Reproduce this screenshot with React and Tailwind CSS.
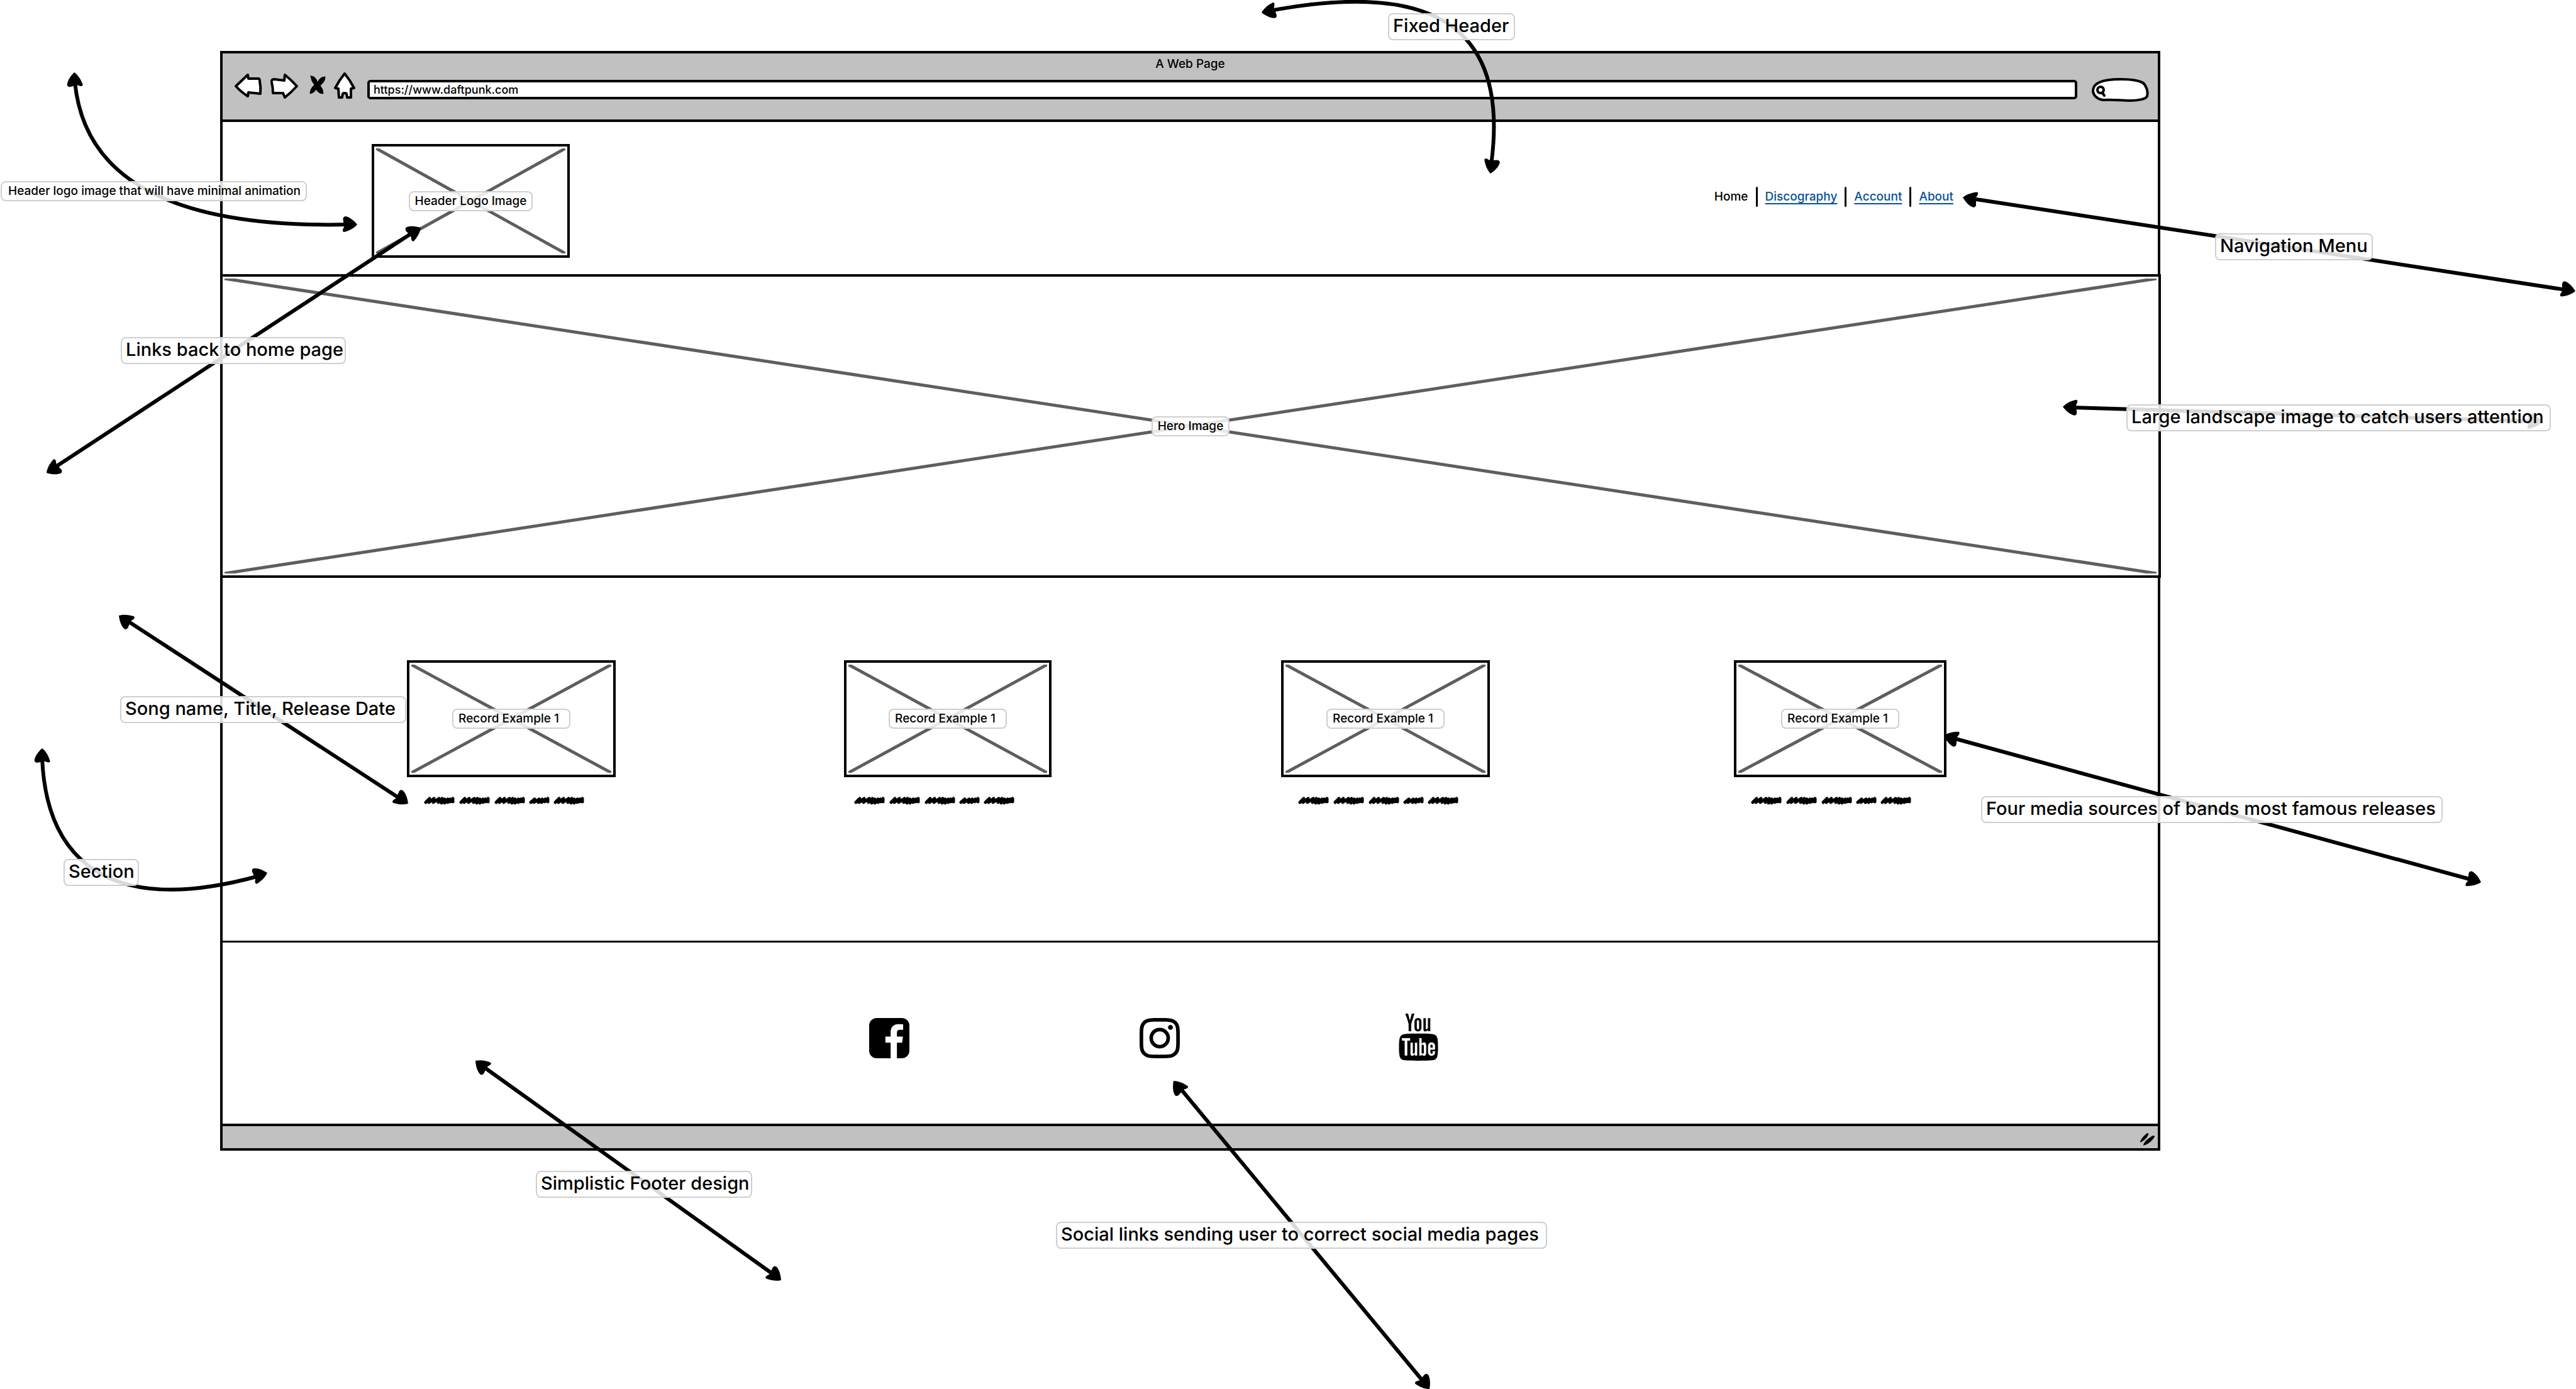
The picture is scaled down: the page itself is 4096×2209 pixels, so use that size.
import { FaInstagram } from "react-icons/fa";
import { TfiYoutube } from "react-icons/tfi";

const CANVAS_WIDTH = 4096;
const CANVAS_HEIGHT = 2209;

const HEAD =
  "M0 0 C-5 -6 -12 -12 -19 -13 Q-24 -12 -22 -5 L-21 4 Q-25 11 -21 12 C-13 10 -5 6 0 0 Z";

/* Each arrow runs between two tips; angles point outwards from the shaft. */
const ARROWS = [
  { d: "M2020 17 C2250 -26 2404 20 2371 262", a: [2006, 20, 168], b: [2370, 276, 96] },
  { d: "M119 130 C135 300 300 363 555 357", a: [118, 115, -95], b: [568, 357, 0] },
  { d: "M86 744 L656 370", a: [74, 752, 147], b: [669, 362, -33] },
  { d: "M202 987 L636 1270", a: [189, 979, 213], b: [649, 1278, 33] },
  { d: "M67 1205 C72 1335 140 1468 412 1393", a: [67, 1190, -92], b: [425, 1388, -17] },
  { d: "M3136 316 L4080 461", a: [3121, 314, 189], b: [4095, 463, 9] },
  { d: "M3296 648 L4027 670", a: [3280, 647, 182], b: [4042, 671, 2] },
  { d: "M3106 1174 L3930 1399", a: [3091, 1170, 195], b: [3945, 1403, 15] },
  { d: "M768 1696 L1230 2027", a: [756, 1687, 216], b: [1242, 2036, 36] },
  { d: "M1876 1730 L2263 2197", a: [1866, 1719, 230], b: [2273, 2209, 50] },
];

const NOTES = [
  { text: "Fixed Header", x: 2207, y: 21, w: 202 },
  { text: "Header logo image that will have minimal animation", x: 1, y: 288, w: 487, small: true },
  { text: "Links back to home page", x: 192, y: 536, w: 358 },
  { text: "Navigation Menu", x: 3522, y: 371, w: 251 },
  { text: "Large landscape image to catch users attention", x: 3381, y: 643, w: 675 },
  { text: "Song name, Title, Release Date", x: 191, y: 1107, w: 455 },
  { text: "Section", x: 101, y: 1366, w: 120 },
  { text: "Four media sources of bands most famous releases", x: 3150, y: 1266, w: 734 },
  { text: "Simplistic Footer design", x: 852, y: 1862, w: 344 },
  { text: "Social links sending user to correct social media pages", x: 1679, y: 1943, w: 781 },
];

const RECORDS = [
  { box: "w-[332px]", line: "ml-[27px]" },
  { box: "ml-[363px] w-[330px]", line: "ml-4" },
  { box: "ml-[365px] w-[332px]", line: "ml-[27px]" },
  { box: "ml-[388px] w-[338px]", line: "ml-[27px]" },
];

function Tag({ children, className = "px-2" }) {
  return (
    <span
      className={`relative rounded-lg border-2 border-[#cfcfcf] bg-white/85 text-[19px] leading-7 whitespace-nowrap ${className}`}
    >
      {children}
    </span>
  );
}

function Placeholder({ label, className, tagClassName }) {
  return (
    <div className={`relative flex items-center justify-center border-4 border-black bg-white ${className}`}>
      <svg className="absolute inset-[3px] h-[calc(100%-6px)] w-[calc(100%-6px)]" aria-hidden="true">
        <line x1="0" y1="0" x2="100%" y2="100%" stroke="#5e5e5e" strokeWidth="5" />
        <line x1="0" y1="100%" x2="100%" y2="0" stroke="#5e5e5e" strokeWidth="5" />
      </svg>
      <Tag className={tagClassName}>{label}</Tag>
    </div>
  );
}

const LONG_WORD =
  "M3 9 L9 3 L8 9 L16 3 L15 9 L24 3 L23 9 L29 3 L28 10 L33 4 L33 10 L38 4 L38 9 L42 4 L42 8 L46 3 L46 8";
const SHORT_WORD = "M3 9 L9 4 L8 9 L16 4 L15 9 L21 4 L20 9 L26 4 L25 8 L30 3 L30 8";

function Scribble({ className }) {
  return (
    <svg
      className={`mt-[31px] h-3 w-[257px] overflow-visible ${className}`}
      viewBox="0 0 257 12"
      fill="none"
      stroke="black"
      strokeWidth="5"
      strokeLinecap="round"
      strokeLinejoin="round"
      aria-hidden="true"
    >
      <path d={LONG_WORD} />
      <path d={LONG_WORD} transform="translate(56 0)" />
      <path d={LONG_WORD} transform="translate(112 0)" />
      <path d={SHORT_WORD} transform="translate(167 0)" />
      <path d={LONG_WORD} transform="translate(206 0)" />
    </svg>
  );
}

function ToolIcon({ label, className, box, children }) {
  return (
    <button type="button" aria-label={label} className={`block flex-none ${className}`}>
      <svg
        className="h-full w-full overflow-visible"
        viewBox={box}
        fill="white"
        stroke="black"
        strokeWidth="4"
        strokeLinejoin="round"
        strokeLinecap="round"
      >
        {children}
      </svg>
    </button>
  );
}

function Toolbar() {
  return (
    <div className="h-[109px] border-b-4 border-black bg-[#c1c1c1]">
      <h1 className="h-[30px] pt-[3px] text-center text-[19px] leading-7">A Web Page</h1>
      <div className="flex h-12 items-start pr-[14px] pl-[19px]">
        <ToolIcon label="Back" className="h-[42px] w-11" box="0 0 44 42">
          <path d="M2 22 L21 4 L22 10 L38 10 Q40 10 40 14 Q42 24 41 34 L22 32 L21 38 Q10 31 2 22 Z" />
        </ToolIcon>
        <ToolIcon label="Forward" className="ml-[13px] h-[42px] w-11" box="0 0 44 42">
          <path d="M2 16 Q1 11 6 11 L22 13 L23 4 Q33 12 42 22 Q33 32 23 40 L20 33 L4 33 Q4 24 2 16 Z" />
        </ToolIcon>
        <ToolIcon label="Stop" className="ml-[19px] h-[42px] w-6" box="0 0 24 42">
          <path
            d="M1 6 Q8 5 12 16 Q16 7 24 7 Q24 15 16 21 Q21 27 21 34 Q13 34 10 27 Q6 33 0 34 Q0 26 7 20 Q2 14 1 6 Z"
            fill="black"
            strokeWidth="1"
          />
        </ToolIcon>
        <ToolIcon label="Home" className="ml-[14px] h-[42px] w-[34px]" box="0 0 34 42">
          <path d="M17 2 Q26 13 32 25 L27 26 L27 40 L21 40 L20 34 Q17 32 14 34 L13 40 L8 40 L7 26 L2 25 Q8 13 17 2 Z" />
        </ToolIcon>
        <input
          type="text"
          aria-label="Address"
          defaultValue="https://www.daftpunk.com"
          className="mt-3 ml-[19px] h-[31px] min-w-0 flex-1 rounded-[5px] border-4 border-black bg-white pl-[6px] text-[18px] leading-6 outline-none"
        />
        <div className="relative mt-[9px] ml-[23px] h-[38px] w-[91px] flex-none">
          <svg
            className="absolute inset-0 h-full w-full"
            viewBox="0 0 91 38"
            fill="white"
            stroke="black"
            strokeWidth="4"
            strokeLinecap="round"
            strokeLinejoin="round"
            aria-hidden="true"
          >
            <path d="M19 35 C8 34 2 27 2 20 C2 6 22 2 46 2 C62 2 75 4 82 8 C87 13 90 22 88 29 C86 34 72 36 60 36 C46 36 34 34 19 35 Z" />
            <circle cx="14" cy="19" r="5" strokeWidth="4" />
            <path d="M17 24 L20 28" />
          </svg>
          <input
            type="search"
            aria-label="Search"
            className="relative h-full w-full bg-transparent pr-3 pl-7 text-[18px] outline-none"
          />
        </div>
      </div>
    </div>
  );
}

function NavLink({ href, children }) {
  return (
    <a href={href} className="text-[#06529a] underline decoration-2 underline-offset-4">
      {children}
    </a>
  );
}

function Divider() {
  return <span className="h-8 w-[3px] rounded-full bg-black" />;
}

function SiteHeader() {
  return (
    <header className="flex h-[242px] items-start justify-between pr-[325px] pl-[237px]">
      <Placeholder label="Header Logo Image" className="mt-[35px] h-[181px] w-[315px]" />
      <nav className="mt-[103px] flex h-8 items-center gap-3 text-[19px] leading-7">
        <span>Home</span>
        <Divider />
        <NavLink href="#discography">Discography</NavLink>
        <Divider />
        <NavLink href="#account">Account</NavLink>
        <Divider />
        <NavLink href="#about">About</NavLink>
      </nav>
    </header>
  );
}

function FacebookIcon() {
  return (
    <svg className="size-16" viewBox="0 128 1536 1536" aria-hidden="true">
      <path d="M1248 128q119 0 203.500 84.500t84.500 203.500v960q0 119-84.500 203.500t-203.500 84.500h-188v-595h199l30-232h-229v-148q0-56 23.500-84t91.500-28l122-1v-207q-63-9-178-9-136 0-217.500 80t-81.500 226v171h-200v232h200v595h-532q-119 0-203.500-84.500t-84.500-203.500v-960q0-119 84.500-203.500t203.500-84.500h960z" />
    </svg>
  );
}

function BrowserWindow() {
  return (
    <div className="border-4 border-black bg-white">
      <Toolbar />
      <SiteHeader />
      <Placeholder label="Hero Image" className="-mr-[5px] -ml-1 h-[483px]" />
      <main className="flex h-[580px] border-b-[3px] border-black pt-[131px] pl-[293px]">
        {RECORDS.map((record, i) => (
          <article key={i} className={`flex-none ${record.box}`}>
            <Placeholder label="Record Example 1" className="h-[186px]" tagClassName="pr-4 pl-2" />
            <Scribble className={record.line} />
          </article>
        ))}
      </main>
      <footer className="flex h-[288px] items-start pt-[120px] pl-[1028px]">
        <a href="#facebook" aria-label="Facebook" className="block">
          <FacebookIcon />
        </a>
        <a href="#instagram" aria-label="Instagram" className="ml-[366px] block">
          <FaInstagram className="size-16" viewBox="0 32 448 448" />
        </a>
        <a href="#youtube" aria-label="YouTube" className="-mt-[7px] ml-[342px] block">
          <TfiYoutube className="size-[75px]" />
        </a>
      </footer>
      <div className="flex h-[39px] items-end justify-end border-t-4 border-black bg-[#c1c1c1] pr-1 pb-1">
        <svg className="h-5 w-6" viewBox="0 0 24 20" aria-hidden="true">
          <path d="M0 15 Q0 9 11 0 Q14 0 13 3 Q9 11 0 15 Z M5 20 Q5 13 20 4 Q24 4 23 6 Q16 17 5 20 Z" />
        </svg>
      </div>
    </div>
  );
}

function Arrows() {
  return (
    <svg
      className="pointer-events-none absolute top-0 left-0 w-full"
      viewBox={`0 0 ${CANVAS_WIDTH} ${CANVAS_HEIGHT}`}
      aria-hidden="true"
    >
      {ARROWS.map(({ d, a, b }) => (
        <g key={d}>
          <path d={d} fill="none" stroke="black" strokeWidth="6" />
          <path d={HEAD} transform={`translate(${a[0]} ${a[1]}) rotate(${a[2]})`} />
          <path d={HEAD} transform={`translate(${b[0]} ${b[1]}) rotate(${b[2]})`} />
        </g>
      ))}
    </svg>
  );
}

function Note({ text, x, y, w, small }) {
  const size = small ? "h-8 text-[19px] leading-7 px-[10px]" : "h-[43px] text-[29px] leading-9 px-[6px]";
  return (
    <p
      className={`absolute rounded-lg border-2 border-[#cfcfcf] bg-white/85 whitespace-nowrap ${size}`}
      style={{
        left: `${(x / CANVAS_WIDTH) * 100}%`,
        top: `${y}px`,
        width: `${(w / CANVAS_WIDTH) * 100}%`,
      }}
    >
      {text}
    </p>
  );
}

export default function App() {
  return (
    <div className="relative min-h-screen w-full overflow-hidden bg-white pt-[81px] pr-[661px] pl-[350px] font-['Inter',sans-serif] font-medium text-black">
      <BrowserWindow />
      <Arrows />
      {NOTES.map((note) => (
        <Note key={note.text} {...note} />
      ))}
    </div>
  );
}
